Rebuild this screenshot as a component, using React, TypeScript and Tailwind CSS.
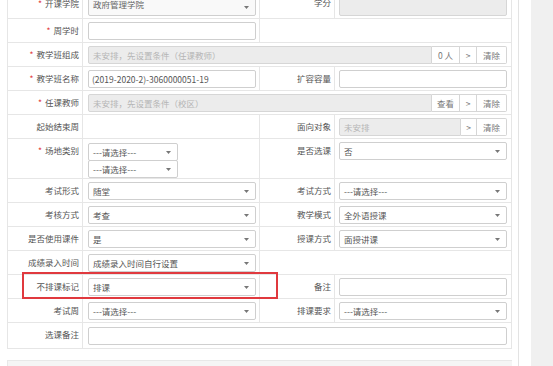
import React from "react";

const FONT = '"Noto Sans CJK SC", "Noto Sans", sans-serif';
const B = "border-r border-b border-[#e6e6e6]";

function Caret() {
  return (
    <svg width="5" height="3" viewBox="0 0 5 3" className="absolute right-[6px] top-[7px]">
      <path d="M0 0h5L2.5 3z" fill="#777" />
    </svg>
  );
}

function Select({ text, className = "" }: { text: string; className?: string }) {
  return (
    <div className={`relative h-[18px] border border-[#cfcfcf] rounded-[2px] bg-white flex items-center pl-[4px] text-[#555] ${className}`}>
      {text}
      <Caret />
    </div>
  );
}

function Input({ text = "", className = "" }: { text?: string; className?: string }) {
  return (
    <div className={`h-[18px] border border-[#cfcfcf] rounded-[2px] bg-white flex items-center pl-[3px] text-[#555] ${className}`}>
      {text}
    </div>
  );
}

function Label({ text, req, pt = "pt-[5px]" }: { text: string; req?: boolean; pt?: string }) {
  return (
    <div className={`${B} flex justify-end items-start ${pt} pr-[3px] text-[#555] leading-[12px] whitespace-nowrap`}>
      {req && <span className="text-[#e23b3b] mr-[3px]">*</span>}
      {text}
    </div>
  );
}

function Btn({ text, w, last }: { text: string; w: string; last?: boolean }) {
  return (
    <div className={`${w} h-[18px] border border-l-0 border-[#d6d6d6] bg-white flex items-center justify-center text-[#777] ${last ? "rounded-r-[2px]" : ""}`}>
      {text}
    </div>
  );
}

function Group({ placeholder, buttons }: { placeholder: string; buttons: { text: string; w: string }[] }) {
  return (
    <div className="flex h-[18px]">
      <div className="flex-1 bg-[#ececec] border border-[#d6d6d6] rounded-l-[2px] pl-[4px] flex items-center text-[#b5b5b5]">
        {placeholder}
      </div>
      {buttons.map((b, i) => (
        <Btn key={i} text={b.text} w={b.w} last={i === buttons.length - 1} />
      ))}
    </div>
  );
}

function CellL({ children, span = "" }: { children?: React.ReactNode; span?: string }) {
  return <div className={`${B} pl-[5px] pr-[3px] pt-[3px] ${span}`}>{children}</div>;
}
function CellR({ children }: { children?: React.ReactNode }) {
  return <div className={`${B} pl-[4px] pr-[4px] pt-[3px]`}>{children}</div>;
}

export default function App() {
  return (
    <div className="relative w-[553px] h-[366px] overflow-hidden bg-white flex text-[8.5px]" style={{ fontFamily: FONT }}>
      <div className="w-[531px] h-full flex shrink-0">
        <div className="w-[519px] h-full border-r border-[#e3e3e3] pl-[7px] shrink-0">
          <div className="-mt-[6px] w-[505px] border-l border-t border-[#e6e6e6] grid grid-cols-[75px_177px_75px_177px] grid-rows-[24px_24px_24px_24px_24px_24px_40px_24px_24px_24px_24px_24px_24px_26px]">
            {/* row 0 */}
            <Label text="开课学院" req pt="pt-[2px]" />
            <CellL>
              <div className="relative h-[18px] border border-[#cfcfcf] rounded-[2px] bg-[#f9f9f9] flex items-start pl-[4px] text-[#666] leading-[12px]">
                <span className="-mt-[1px]">政府管理学院</span>
                <Caret />
              </div>
            </CellL>
            <Label text="学分" pt="pt-[1px]" />
            <CellR>
              <div className="h-[18px] border border-[#d6d6d6] rounded-[2px] bg-[#ececec]" />
            </CellR>

            {/* row 1 */}
            <Label text="周学时" req />
            <CellL>
              <Input />
            </CellL>
            <div className={`${B} col-span-2`} />

            {/* row 2 */}
            <Label text="教学班组成" req />
            <div className={`${B} col-span-3 pl-[5px] pr-[4px] pt-[3px]`}>
              <Group
                placeholder="未安排，先设置条件（任课教师）"
                buttons={[
                  { text: "0 人", w: "w-[28px]" },
                  { text: ">", w: "w-[17px]" },
                  { text: "清除", w: "w-[30px]" },
                ]}
              />
            </div>

            {/* row 3 */}
            <Label text="教学班名称" req />
            <CellL>
              <Input text="(2019-2020-2)-3060000051-19" />
            </CellL>
            <Label text="扩容容量" />
            <CellR>
              <Input />
            </CellR>

            {/* row 4 */}
            <Label text="任课教师" req />
            <div className={`${B} col-span-3 pl-[5px] pr-[4px] pt-[3px]`}>
              <Group
                placeholder="未安排，先设置条件（校区）"
                buttons={[
                  { text: "查看", w: "w-[28px]" },
                  { text: ">", w: "w-[17px]" },
                  { text: "清除", w: "w-[30px]" },
                ]}
              />
            </div>

            {/* row 5 */}
            <Label text="起始结束周" />
            <CellL />
            <Label text="面向对象" />
            <CellR>
              <Group
                placeholder="未安排"
                buttons={[
                  { text: ">", w: "w-[16px]" },
                  { text: "清除", w: "w-[30px]" },
                ]}
              />
            </CellR>

            {/* row 6 */}
            <Label text="场地类别" req />
            <div className={`${B} pl-[5px] pt-[4px]`}>
              <div className="w-[90px] flex flex-col">
                <Select text="---请选择---" />
                <Select text="---请选择---" className="-mt-px" />
              </div>
            </div>
            <Label text="是否选课" />
            <CellR>
              <Select text="否" />
            </CellR>

            {/* row 7 */}
            <Label text="考试形式" />
            <CellL>
              <Select text="随堂" />
            </CellL>
            <Label text="考试方式" />
            <CellR>
              <Select text="---请选择---" />
            </CellR>

            {/* row 8 */}
            <Label text="考核方式" />
            <CellL>
              <Select text="考查" />
            </CellL>
            <Label text="教学模式" />
            <CellR>
              <Select text="全外语授课" />
            </CellR>

            {/* row 9 */}
            <Label text="是否使用课件" />
            <CellL>
              <Select text="是" />
            </CellL>
            <Label text="授课方式" />
            <CellR>
              <Select text="面授讲课" />
            </CellR>

            {/* row 10 */}
            <Label text="成绩录入时间" />
            <CellL>
              <Select text="成绩录入时间自行设置" />
            </CellL>
            <div className="col-span-2 border-r border-b border-[#e6e6e6]" />

            {/* row 11 */}
            <Label text="不排课标记" />
            <CellL>
              <Select text="排课" />
            </CellL>
            <Label text="备注" />
            <CellR>
              <Input />
            </CellR>

            {/* row 12 */}
            <Label text="考试周" />
            <CellL>
              <Select text="---请选择---" />
            </CellL>
            <Label text="排课要求" />
            <CellR>
              <Select text="---请选择---" />
            </CellR>

            {/* row 13 */}
            <Label text="选课备注" />
            <div className={`${B} col-span-3 pl-[5px] pr-[4px] pt-[4px]`}>
              <Input />
            </div>
          </div>
          <div className="mt-[11px] w-[505px] h-[20px] bg-[#f5f5f5] border-t border-l border-[#e8e8e8]" />
        </div>
        <div className="flex-1" />
      </div>
      <div className="flex-1 h-full bg-[#f0f0f0]" />

      <div className="absolute left-[22px] top-[272px] w-[256px] h-[27px] border-2 border-[#e0393e]" />
    </div>
  );
}
